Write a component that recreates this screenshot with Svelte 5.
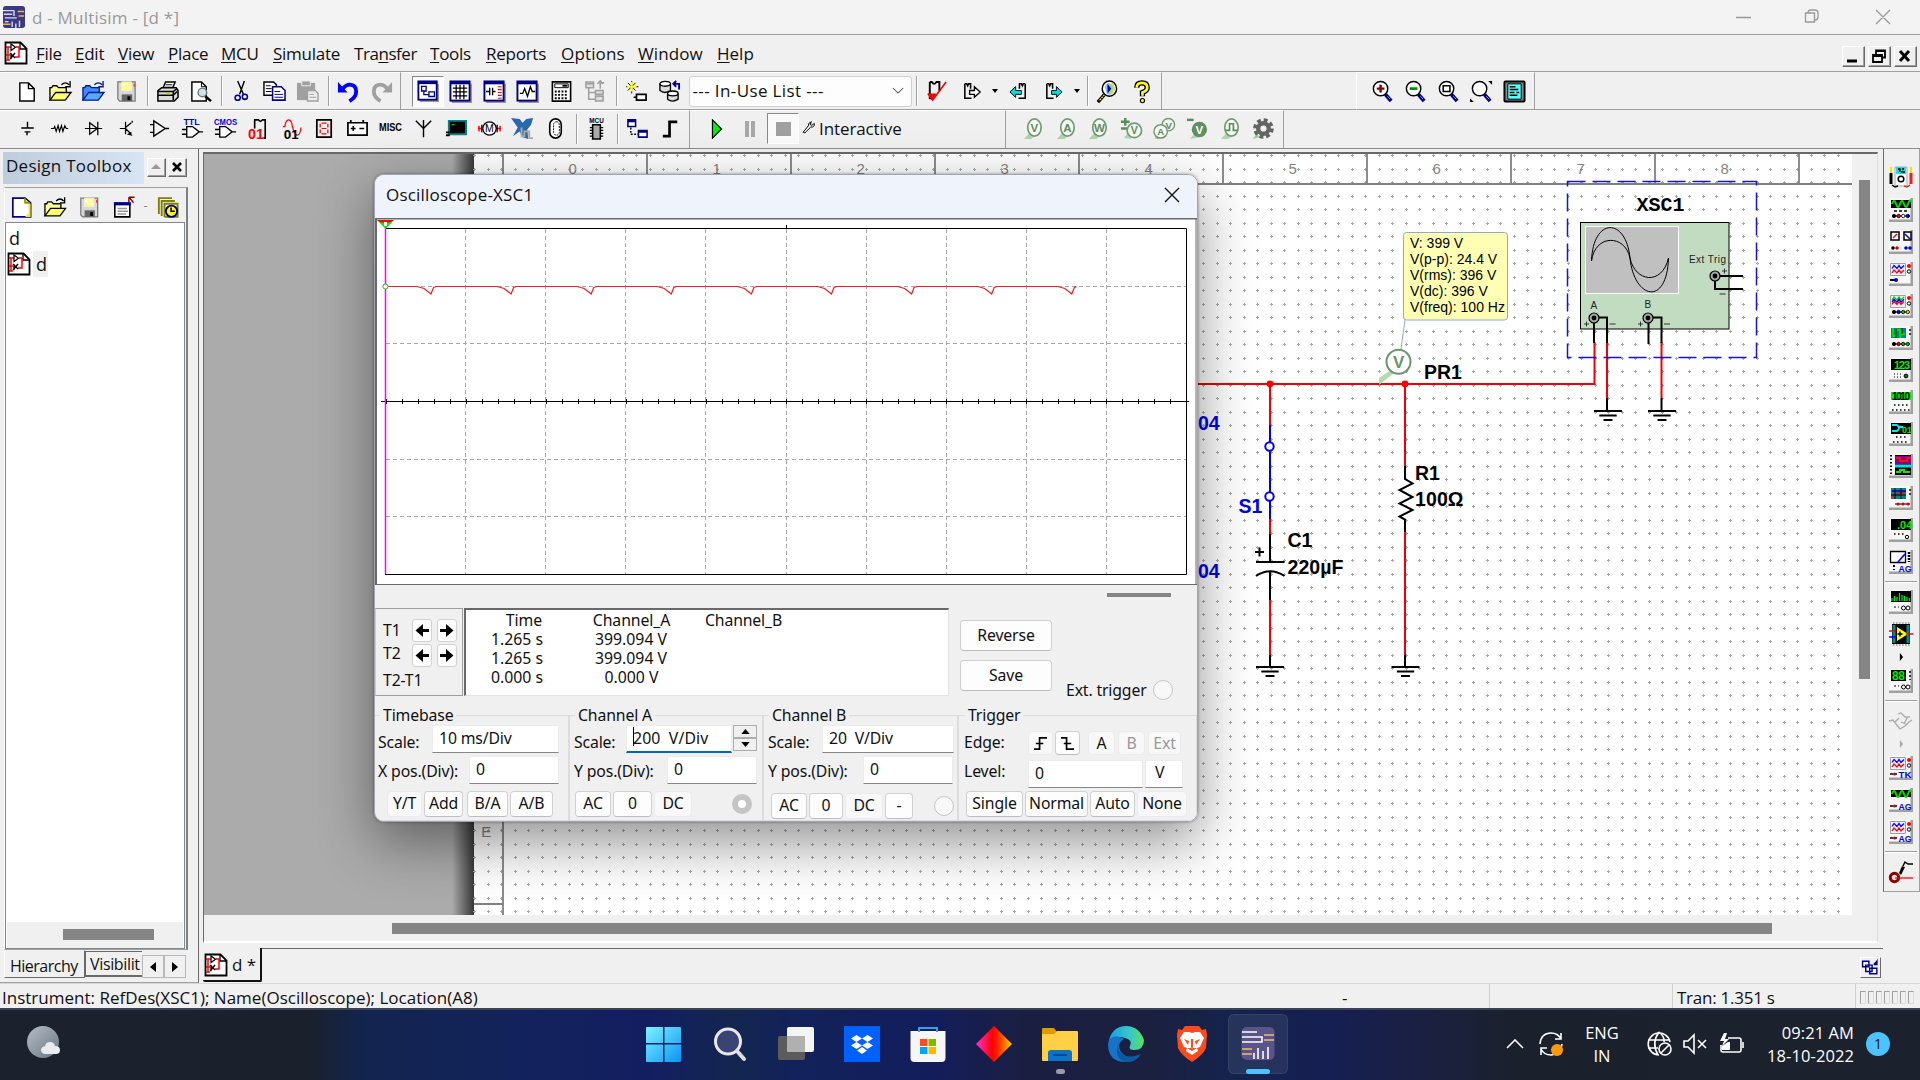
<script>
  const page = '<path d="M4 3h9l6 6v13H4z" fill="#fff" stroke="#000" stroke-width="1.5"/><path d="M13 3v6h6" fill="none" stroke="#000" stroke-width="1.5"/>';
  const folder = (back, front, line) =>
    `<path d="M1 21V8h2l1-2h4l2 2h8v5" fill="${back}" stroke="${line}" stroke-width="1.4"/><path d="M1 21l6-8h16l-6 8z" fill="${front}" stroke="${line}" stroke-width="1.4"/><path d="M13 5q4-4 8 0M22 1v6h-5" fill="none" stroke="${line}" stroke-width="1.4"/>`;
  const panel = (inner) =>
    `<path d="M3 23h20V4" fill="none" stroke="#999" stroke-width="2"/><rect x="1.5" y="1.5" width="20" height="20" fill="#fff" stroke="#000080" stroke-width="2"/><path d="M1 3h21" stroke="#000080" stroke-width="3"/>${inner}`;
  const lens = (inner) =>
    `<path d="M15 15l6 7" stroke="#000080" stroke-width="4"/><path d="M17 17l3 3" stroke="#88f" stroke-width="1"/><circle cx="10" cy="9" r="7.5" fill="#fff" stroke="#000" stroke-width="1.5"/>${inner}`;
  const probe = (t, solid) =>
    `<path d="M2 23l7-8 4 5-3 3z" fill="#aed6ae"/><ellipse cx="13" cy="11" rx="7" ry="9" fill="${solid ? '#5f8f5f' : '#f4f8f4'}" stroke="#739a73" stroke-width="1.8"/><text x="13" y="15.5" text-anchor="middle" font-size="12" font-weight="bold" fill="${solid ? '#fff' : '#5f8a5f'}">${t}</text>`;
  const inst = (inner) =>
    `<path d="M0 0h24v24H0z" fill="#a0a0a0"/><path d="M0 0h21.500v21.500H0z" fill="#f7f7f7"/>${inner}`;
  const screen = '<path d="M2 2h20v8H2z" fill="#000"/>';
  const pins = (a, b, c, d) => `<path d="M3 18h18" stroke="#000"/>` + [a, b, c, d].map((f, i) => `<circle cx="${5 + i * 4.600}" cy="18" r="1.7" fill="${f}" stroke="#000" stroke-width=".8"/>`).join('');
  const waves = (colors) =>
    `<path d="M1.500 1.500h15v12h-15z" fill="#eef" stroke="#a0a0a0"/>` +
    colors.map((c, i) => `<path d="M3 ${(colors.length > 2 ? 6 : 6.500) + i * (colors.length > 2 ? 2.200 : 4.500)}l2-3 3 3 2-3 2 3 3-3" fill="none" stroke="${c}" stroke-width="1.300"/>`).join('') +
    '<circle cx="20" cy="4" r="2" fill="#f00"/><circle cx="20" cy="9.500" r="1.700" fill="#fff" stroke="#000"/>';
  const tag = (t) => `<text x="9.500" y="22" font-size="9.500" font-weight="bold" fill="#00e" textLength="13" lengthAdjust="spacingAndGlyphs">${t}</text><path d="M1 18h8" stroke="#000" stroke-width="1.4" stroke-dasharray="3 1"/><circle cx="5.500" cy="18" r="1.500" fill="#c00"/>`;
  const floppy = '<path d="M3 2h18v20H5l-2-2z" fill="#d8d8d8" stroke="#777" stroke-width="1.3"/><path d="M7 2h10v9H7z" fill="#ffff70" stroke="#eee"/><path d="M8 4h2v2H8zM12 4h2v2h-2zM10 7h2v2h-2zM14 7h2v2h-2z" fill="#fff"/><path d="M7 15h11v7H7z" fill="#666"/><path d="M13 17h3v4h-3z" fill="#000"/><path d="M20 4v3" stroke="#f00"/>';

  const icons = {
    page,
    pageYellow: '<path d="M3 2h13l6 5v15H3z" fill="#fff" stroke="#00008b" stroke-width="1.800"/><path d="M15 2l7 6v14h-6l4-4v-9l-5-2z" fill="#ee0"/><path d="M16 2v5h5" fill="none" stroke="#880" stroke-width="1.5"/>',
    doc: '<path d="M1.500 1.500h15l6 6v15h-21z" fill="#fff" stroke="#000" stroke-width="1.800"/><path d="M16 2v6h6" fill="none" stroke="#000" stroke-width="1.300"/><path d="M2 6h5M2 14h4M4 6v13M2 19h4M12 6h3v10H11" fill="none" stroke="#f00" stroke-width="1.500"/><path d="M7 3v6.500l4.500-3.250z" fill="#fff" stroke="#000" stroke-width="1.200"/><path d="M6 12l5 5M11 12l-5 6M7 12v6" fill="none" stroke="#000" stroke-width="1.400"/>',
    open: folder('#ff9', '#ff6', '#000'),
    openBlue: folder('#3f8cff', '#58a8ff', '#001a8b'),
    save: floppy,
    print: '<path d="M7 9l3-7h10l-3 7" fill="#fff" stroke="#000" stroke-width="1.500"/><path d="M10 5h7M9 7.500h7" stroke="#000"/><path d="M2 11l4-3h15l2 3v7l-4 4H2z" fill="#ddd" stroke="#000" stroke-width="1.600"/><path d="M2 12h16l4-3M2 16h16l4-4M18 12v9" fill="none" stroke="#000" stroke-width="1.600"/><path d="M11 14h4" stroke="#cc0" stroke-width="2"/>',
    preview: '<path d="M3 2h10l5 5v15H3z" fill="#fff" stroke="#000" stroke-width="1.500"/><path d="M13 2v5h5" fill="none" stroke="#000"/><circle cx="14" cy="13" r="4.500" fill="#c8e6ee" stroke="#777" stroke-width="1.500"/><path d="M17 17l6 5" stroke="#000" stroke-width="2.500"/>',
    cut: '<path d="M8 1l6 14M15 1L10 15" stroke="#000" stroke-width="1.500"/><circle cx="8" cy="18.500" r="2.700" fill="none" stroke="#00008b" stroke-width="1.600"/><circle cx="15.500" cy="17.500" r="2.700" fill="none" stroke="#00008b" stroke-width="1.600"/>',
    copy: '<path d="M1 2h10l3 3v11H1z" fill="#fff" stroke="#000" stroke-width="1.500"/><path d="M3 6h5M3 9h6M3 12h6" stroke="#000"/><path d="M10 7h9l4 4v10H10z" fill="#fff" stroke="#00008b" stroke-width="1.600"/><path d="M12 12h6M12 15h9M12 18h9" stroke="#00008b"/>',
    paste: '<path d="M1 3h19v18H1z" fill="#a0a0a0"/><path d="M6 1h9v5H6z" fill="#a0a0a0" stroke="#eee"/><path d="M12 11h8l3 3v8H12z" fill="#eee" stroke="#a0a0a0" stroke-width="1.500"/><path d="M14 15h5M14 18h7" stroke="#a0a0a0"/>',
    undo: '<path d="M1 2v11h10z" fill="#00f"/><path d="M6 9q4-5 9-4t5 7-7 10" fill="none" stroke="#00f" stroke-width="4"/>',
    redo: '<path d="M23 2v11H13z" fill="#a0a0a0"/><path d="M18 9q-4-5-9-4t-5 7 7 10" fill="none" stroke="#a0a0a0" stroke-width="4"/>',
    tree: panel('<path d="M5 7h5v5H5zM13 13h6v5h-6zM7.500 12v4h5" fill="none" stroke="#000080" stroke-width="1.400"/>'),
    grid: panel('<path d="M4 8.500h15M4 12.500h15M4 16.500h15M7.500 5v15M11.500 5v15M15.500 5v15" stroke="#000" stroke-width="1.300"/>'),
    breadboard: panel('<path d="M3 12h4M10 12h3M7 8v8M10 8v8" stroke="#000" stroke-width="1.400"/><path d="M15.500 7h4M15.500 10h4M15.500 13h4M15.500 16h4M15.500 19h4" stroke="#f00" stroke-width="1.200"/>'),
    graph: panel('<path d="M4 14h3l2-5 3 8 3-10 2 5h3" fill="none" stroke="#000" stroke-width="1.400"/>'),
    calc: '<path d="M2.500 2h19v20h-19z" fill="#fff" stroke="#000" stroke-width="1.700"/><path d="M5 4h14v4H5z" fill="none" stroke="#000"/><path d="M13 6h5" stroke="#000" stroke-width="2"/><path d="M5 12h14M5 15.500h14M5 19h14" stroke="#000" stroke-width="2" stroke-dasharray="2 1.500"/>',
    treeOff: '<path d="M3 2h8v6H3zM13 11h8v4h-8zM13 17h8v5h-8z" fill="#ddd" stroke="#a0a0a0" stroke-width="1.600"/><path d="M3 4h8M6 8v12h7M6 13h7M18 9V3h4M15 4l3-3 3 3" fill="none" stroke="#a0a0a0" stroke-width="1.600"/>',
    newPart: '<path d="M7 1v13M1 7h13M3 3l8 8M11 3l-8 8" stroke="#000" stroke-width="1"/><path d="M7 2v10M2 7h10" stroke="#ff0" stroke-width="2"/><path d="M12 15h10v6H12zM9 18h3" fill="#fff" stroke="#000" stroke-width="1.800"/>',
    database: '<path d="M2 4v7q5 4 11 0V4" fill="#ddd" stroke="#000" stroke-width="1.400"/><ellipse cx="7.500" cy="4" rx="5.500" ry="2.500" fill="#fff" stroke="#000" stroke-width="1.400"/><path d="M10 14v6q5 4 11 0v-6" fill="#ddd" stroke="#000" stroke-width="1.400"/><ellipse cx="15.500" cy="14" rx="5.500" ry="2.500" fill="#fff" stroke="#000" stroke-width="1.400"/><path d="M22 10V4h-5M19 1l-3 3 3 3" fill="none" stroke="#00008b" stroke-width="2"/>',
    erc: '<path d="M5 2v17h3M5 2h2q3 4 5 0h3v10" fill="none" stroke="#000" stroke-width="2"/><path d="M3 14l5 7L22 2" fill="none" stroke="#f00" stroke-width="1.700"/><path d="M3 14h9l-4 8z" fill="#f00"/>',
    forward: '<path d="M4 4v15h7M4 4h2l1 2 1-2h2v5" fill="none" stroke="#000" stroke-width="1.600"/><path d="M9 11h5V7l6 5.500-6 5.500v-3H9z" fill="#fff" stroke="#000" stroke-width="1.400"/>',
    backCyan: '<path d="M19 4v15h-7M19 4h-2l-1 2-1-2h-2v5" fill="none" stroke="#000" stroke-width="1.600"/><path d="M15 11H9V7l-6 5.500L9 18v-3h6z" fill="#0dd" stroke="#000"/>',
    forwardCyan: '<path d="M4 4v15h7M4 4h2l1 2 1-2h2v5" fill="none" stroke="#000" stroke-width="1.600"/><path d="M9 11h5V7l6 5.500-6 5.500v-3H9z" fill="#0dd" stroke="#000"/>',
    find: '<path d="M9 15L2 23" stroke="#000" stroke-width="3.500"/><path d="M9 15L3 22" stroke="#ff0" stroke-width="1.300" stroke-dasharray="2 1"/><ellipse cx="14" cy="9" rx="7.500" ry="8" fill="#fff" stroke="#000" stroke-width="1.500"/><path d="M9 7q4-7 9-1v7q-4 5-7 1z" fill="#8ed0e0"/><path d="M12 4l4 5-4 5" fill="#00008b"/><path d="M17 3l2 6-3 6" stroke="#dd3" stroke-width="2" fill="none"/>',
    help: '<path d="M7 8q0-5 5.500-5t5.500 5q0 3-5 5v4" fill="none" stroke="#000" stroke-width="5.500"/><path d="M7 8q0-5 5.500-5t5.500 5q0 3-5 5v3.500" fill="none" stroke="#ff0" stroke-width="2.800"/><circle cx="13" cy="21.500" r="2.200" fill="#ff0" stroke="#000" stroke-width="1.200"/>',
    zoomIn: lens('<path d="M10 5v8M6 9h8" stroke="#8b0000" stroke-width="2.600"/>'),
    zoomOut: lens('<path d="M6 9h8" stroke="#080" stroke-width="2.800"/>'),
    zoomArea: lens('<path d="M6.500 6h7v6h-7z" fill="none" stroke="#000" stroke-width="1.600"/>'),
    zoomFit: lens('<path d="M19 1h4v4zM0 19v4h4z" fill="#000"/>'),
    zoomPage: '<rect x="1.500" y="1.500" width="21" height="21" rx="1" fill="#888" stroke="#000" stroke-width="2"/><path d="M5 4h14v16H5z" fill="#5ff" stroke="#000"/><path d="M7 7h6M7 10h9M7 13h5M7 16h8M14 13h3" stroke="#000" stroke-width="1.500"/>',
    ground: '<path d="M12 5v6M5.500 11.500h13M9 15.500h6M11.500 15v4" stroke="#000" stroke-width="1.500" fill="none"/>',
    resistor: '<path d="M2 12h3l1-2 1.500 5 2-6 1.500 6 2-6 1.500 6 2-6 1.500 3h2" fill="none" stroke="#000" stroke-width="1.200"/>',
    diode: '<path d="M3 12h18M8 6v12l8-6zM16.500 5v14" fill="none" stroke="#000" stroke-width="1.300"/>',
    transistor: '<path d="M5 12h6M11 5v13M11 11l6-5M11 12l6 6M18 4v2M18 19l-4-1 3-2" fill="none" stroke="#000" stroke-width="1.300"/>',
    opamp: '<path d="M6 4v16l12-8zM2 8h4M2 16h4M18 12h4" fill="#f4f4f4" stroke="#000" stroke-width="1.400"/>',
    ttl: '<text x="11" y="8" text-anchor="middle" font-size="10" font-weight="bold" fill="#00e" textLength="17" lengthAdjust="spacingAndGlyphs">TTL</text><path d="M6 10h6l7 5.500-7 5.500H6zM1 13h5M1 18h5M19 15.500h4" fill="#fff" stroke="#000" stroke-width="1.400"/>',
    cmos: '<text x="12" y="8" text-anchor="middle" font-size="10" font-weight="bold" fill="#00e" textLength="24" lengthAdjust="spacingAndGlyphs">CMOS</text><path d="M6 10h6l7 5.500-7 5.500H6zM1 13h5M1 18h5M19 15.500h4" fill="#fff" stroke="#000" stroke-width="1.400"/>',
    digital: '<path d="M8 12V3h4q2 3 4 0h3v19h-2" fill="none" stroke="#000" stroke-width="1.700"/><text x="1" y="23" font-size="15" font-weight="bold" fill="#f00">01</text>',
    mixed: '<path d="M3 10h2q1-7 4-7t4 7q2 9 5 9t4-8" fill="none" stroke="#f00" stroke-width="1.300"/><text x="4" y="23" font-size="14" font-weight="bold">01</text>',
    indicator: '<path d="M4 3h15v18H4z" fill="#eee" stroke="#000" stroke-width="1.800"/><path d="M9 6.500h5M9 12h5M9 17.500h5M7.500 7v4M15.500 7v4M7.500 13v4M15.500 13v4" stroke="#f00" stroke-width="1.300"/>',
    battery: '<path d="M2 6h20v13H2zM5 3v3M18 3v3" fill="#fff" stroke="#000" stroke-width="1.800"/><path d="M5 12h5M7.500 9.500v5M14 12h5" stroke="#000" stroke-width="1.500"/>',
    misc: '<text x="0" y="15" font-size="10.500" font-weight="bold" textLength="24" lengthAdjust="spacingAndGlyphs">MISC</text>',
    antenna: '<path d="M12 3v18M4 4l8 8 8-8" fill="none" stroke="#000" stroke-width="1.500"/>',
    monitor: '<path d="M4 4h18v14H4z" fill="#000" stroke="#088" stroke-width="2"/><path d="M1 16h5M1 19h4M6 8h2" stroke="#000" stroke-width="2"/><path d="M7 8h3" stroke="#0c0" stroke-width="1.500"/>',
    motor: '<path d="M0 12h5M19 12h5M1 9v6M23 9v6" stroke="#f00" stroke-width="1.500"/><circle cx="12" cy="12" r="7" fill="#fff" stroke="#000" stroke-width="1.300"/><text x="12" y="16" text-anchor="middle" font-size="11">M</text><path d="M4 8v8M20 8v8" stroke="#000" stroke-width="1.300"/>',
    ni: '<path d="M0 1l9 1 3 4 4-4 7-1-2 7-4 5 1 10-6-2-3-6-7 5 5-9z" fill="#2b68ad"/><path d="M11 11v9h3v-5h5v7h4" fill="none" stroke="#aaa" stroke-width="2"/>',
    connector: '<rect x="6" y="2" width="12" height="20" rx="6" fill="#fff" stroke="#000" stroke-width="1.700"/><rect x="10" y="5" width="6" height="14" rx="3" fill="none" stroke="#000" stroke-dasharray="2 1"/>',
    mcu: '<text x="12" y="6" text-anchor="middle" font-size="8" font-weight="bold" textLength="15" lengthAdjust="spacingAndGlyphs">MCU</text><path d="M8 8h8v15H8z" fill="#aaa" stroke="#000" stroke-width="1.600"/><path d="M5 11h3M5 14h3M5 17h3M5 20h3M16 11h3M16 14h3M16 17h3M16 20h3" stroke="#000" stroke-width="1.300"/>',
    hier: '<path d="M2 3h8v7H2zM13 14h9v7h-9z" fill="#fff" stroke="#000080" stroke-width="1.600"/><path d="M2 4h8M13 15h9" stroke="#000080" stroke-width="3"/><path d="M5 11v7h8" fill="none" stroke="#000" stroke-width="1.500" stroke-dasharray="2 1.500"/>',
    bus: '<path d="M4 20h7V5h8" fill="none" stroke="#000" stroke-width="2.800"/>',
    wrench: '<path d="M2 21L11 10q-1-5 5-7l-2 5 3 1 4-3q1 7-6 6L5 22z" fill="#fff" stroke="#000" stroke-width="1.700"/>',
    probeV: probe('V'), probeA: probe('A'), probeW: probe('W'),
    probeDiff: '<path d="M1 5h9M5.500 1v8M1 12h7" stroke="#5b8a5b" stroke-width="2.500"/><path d="M4 22l5-6 4 4-2 3z" fill="#aed6ae"/><circle cx="15" cy="14" r="7.500" fill="#f4f8f4" stroke="#739a73" stroke-width="1.800"/><text x="15" y="18" text-anchor="middle" font-size="11" font-weight="bold" fill="#5f8a5f">V</text>',
    probeVA: '<circle cx="16" cy="8" r="6.500" fill="#f4f8f4" stroke="#739a73" stroke-width="1.500"/><text x="16.500" y="12" text-anchor="middle" font-size="10" font-weight="bold" fill="#5f8a5f">V</text><path d="M2 23v-4l5 4z" fill="#aed6ae"/><circle cx="8" cy="15" r="7" fill="#f4f8f4" stroke="#739a73" stroke-width="1.500"/><text x="8" y="19" text-anchor="middle" font-size="10" font-weight="bold" fill="#5f8a5f">A</text>',
    probeRef: '<path d="M1 3h7" stroke="#5b8a5b" stroke-width="2.500"/><path d="M4 23l6-7 4 5z" fill="#aed6ae"/><circle cx="14" cy="13" r="8" fill="#5f8f5f"/><text x="14" y="17.500" text-anchor="middle" font-size="12" font-weight="bold" fill="#fff">V</text>',
    probeDig: '<path d="M2 23l7-8 4 5-3 3z" fill="#aed6ae"/><ellipse cx="13" cy="11" rx="7" ry="9" fill="#f4f8f4" stroke="#739a73" stroke-width="1.800"/><path d="M7 14h4V7h4v7h4" fill="none" stroke="#5b8a5b" stroke-width="1.700"/>',
    gear: '<path d="M2 23l4-6 3 4z" fill="#9c9"/><circle cx="13" cy="12" r="8.500" fill="none" stroke="#646464" stroke-width="4.500" stroke-dasharray="3.900 2.770"/><circle cx="13" cy="12" r="5.500" fill="none" stroke="#646464" stroke-width="4.500"/>',
    rename: '<path d="M3 8h16v14H3z" fill="#fff" stroke="#000" stroke-width="1.700"/><path d="M2 8h18" stroke="#00008b" stroke-width="3.500"/><path d="M6 13h10M6 16h11M6 19h9" stroke="#999" stroke-width="1.500"/><path d="M19 2l4 5M18 1v5M18 1h6" stroke="#8b0000" stroke-width="1.500"/>',
    versions: '<path d="M2 19V2h14M5 21V5h14M8 22V8h14v14H8" fill="none" stroke="#808000" stroke-width="2"/><circle cx="15.500" cy="16" r="6" fill="#ff0" stroke="#00008b" stroke-width="2"/><path d="M15 12v4h4" fill="none" stroke="#000" stroke-width="1.700"/>',
    cascade: '<path d="M2 4h8v7H2zM6 9h8v8H6zM11 13h9v7h-9z" fill="#fff" stroke="#00008b" stroke-width="1.800"/><path d="M16 7l3-3 2-3v8h-5z" fill="#00008b"/>',
    brand: '<rect width="24" height="24" rx="3" fill="#3a3a80"/><path d="M0 5h12M1 9h9M2 13h13M2 17h4" stroke="#dcdcf8" stroke-width="1.500"/><path d="M12 5v6M10 17v6M14 19v5M18 16v7" stroke="#dcdcf8" stroke-width="1.500"/><path d="M16 6h7M17 11h6M0 20h8" stroke="#f0b060" stroke-width="1.600"/>',
    multimeter: '<path d="M6 1h12v19H6z" fill="#f7f7f7" stroke="#aaa"/><path d="M7 1h10v7H7z" fill="#2dd"/><path d="M9 3h2v3M13 3h2M12 6h4" stroke="#000" stroke-width="1.300"/><circle cx="12" cy="13" r="2.800" fill="#fff" stroke="#000" stroke-width="1.500"/><path d="M2 1v6M22 1v6" stroke="#fd0" stroke-width="2"/><path d="M2 7v11" stroke="#000" stroke-width="3"/><path d="M22 7v11" stroke="#e22" stroke-width="3"/><path d="M3 19l3 2 3-1" fill="none" stroke="#000" stroke-width="1.500"/><path d="M21 19l-3 2-3-1" fill="none" stroke="#e22" stroke-width="1.500"/>',
    funcgen: inst(screen + '<path d="M3 6q2-6 4 0t4 0 4 0 4 0 3-2" fill="none" stroke="#0d0" stroke-width="2"/><path d="M5 13h14" stroke="#000" stroke-width="1.500" stroke-dasharray="3 2"/>' + pins('#000', '#f00', '#fff', '#00f')),
    watt: inst('<path d="M2 2h8v8H2zM15 2h7v8h-7z" fill="#fff" stroke="#000" stroke-width="1.500"/><path d="M4 8l4-4" stroke="#f00" stroke-width="1.500"/><path d="M16 4l5 5" stroke="#00f" stroke-width="1.500"/><circle cx="4" cy="18" r="1.800"/><circle cx="8" cy="18" r="1.800" fill="#d00"/><circle cx="17" cy="18" r="1.800" fill="#00c"/><circle cx="21" cy="18" r="1.800" fill="#00c"/>'),
    scope2: inst(waves(['#00f', '#f00']) + '<path d="M1 18h5" stroke="#000" stroke-width="2"/><circle cx="7" cy="18" r="2" fill="#00c"/>'),
    scope4: inst(waves(['#0c0', '#00f', '#f00']) + pins('#000', '#00f', '#0c0', '#fd0')),
    bode: inst('<path d="M2 2h15v10H2z" fill="#088"/><path d="M4 2v8h3V4h4v8M12 8h4" fill="none" stroke="#0d0" stroke-width="2"/><path d="M7 3v9M13 2v6" stroke="#000"/><path d="M21 3v8" stroke="#000" stroke-width="1.400" stroke-dasharray="2"/>' + pins('#000', '#f00', '#0a0', '#0c0')),
    counter: inst('<path d="M2 1h20v11H2z" fill="#000"/><text x="5" y="11" font-size="11" font-weight="bold" fill="#0e0" textLength="16">123</text><circle cx="17" cy="18" r="1.900" fill="#080" stroke="#000"/><path d="M5 16h7M5 19h7" stroke="#000" stroke-dasharray="1 2"/>'),
    wordgen: inst('<path d="M2 2h20v8H2z" fill="#0e0"/><text x="3" y="10" font-size="10" font-weight="bold" textLength="18">1010</text><path d="M5 15h15M3 20h18" stroke="#000" stroke-width="1.300" stroke-dasharray="1.500 2.500"/>'),
    logicConv: inst('<path d="M2 1h20v11H2z" fill="#000"/><path d="M3 3h5q4 3 0 6H3M10 5h4" fill="none" stroke="#0ee" stroke-width="1.800"/><text x="13" y="11" font-size="9" font-weight="bold" fill="#0e0">01</text><path d="M7 15h11M4 20h16" stroke="#000" stroke-width="1.500" stroke-dasharray="1.500 2.500"/>'),
    logicAn: inst('<path d="M6 1h16v20H6z" fill="#000"/><path d="M6 2h16v8H6z" fill="#808"/><path d="M7 4h4v3h7V4h4" fill="none" stroke="#e11" stroke-width="2"/><path d="M6 12h16" stroke="#1de" stroke-width="3"/><path d="M7 18h4v-2h4v2h6" fill="none" stroke="#0e0" stroke-width="2"/><path d="M2 1v21" stroke="#000" stroke-width="2" stroke-dasharray="1.500 2"/>'),
    iv: inst('<path d="M2 2h15v11H2z" fill="#088"/><path d="M3 12q2-5 14-6" fill="none" stroke="#e11" stroke-width="1.600"/><path d="M3 5h14" stroke="#00d" stroke-width="1.600"/><path d="M6 2v11M12 2v11M2 9h15" stroke="#000"/><path d="M21 3v8" stroke="#000" stroke-width="1.400" stroke-dasharray="2"/><path d="M6 18h15" stroke="#000"/><circle cx="9" cy="18" r="1.500" fill="#c00"/><circle cx="14" cy="18" r="1.500" fill="#c00"/><circle cx="19" cy="18" r="1.500" fill="#c00"/>'),
    distortion: inst('<path d="M2 1h20v11H2z" fill="#000"/><text x="8" y="11" font-size="11" font-weight="bold" fill="#0e0">.04</text><path d="M5 16h12" stroke="#000" stroke-width="1.300" stroke-dasharray="1.500 2.500"/><circle cx="18" cy="19" r="1.700" fill="#fff" stroke="#000"/>'),
    agilentIv: inst('<path d="M1.500 1.500h15v11h-15z" fill="#fff" stroke="#000" stroke-width="1.300"/><path d="M9 12l7-8" stroke="#00f" stroke-width="1.700"/><path d="M20 2v10" stroke="#000" stroke-width="2.500" stroke-dasharray="2 1"/><text x="9.500" y="22" font-size="9.500" font-weight="bold" fill="#00e" textLength="13" lengthAdjust="spacingAndGlyphs">AG</text><path d="M5 15v5" stroke="#000" stroke-width="2" stroke-dasharray="2"/>'),
    spectrum: inst('<path d="M2 1h20v11H2z" fill="#000"/><path d="M3 11V8M5.500 11V6M8 11V7M10.500 11V3M13 11V5M15.500 11V6M18 11V7M20.500 11V8" stroke="#0e0" stroke-width="1.300"/><path d="M5 17h5" stroke="#000" stroke-dasharray="2"/><circle cx="14.500" cy="18" r="2" fill="#fff" stroke="#000"/><circle cx="19" cy="18" r="2" fill="#fff" stroke="#000"/>'),
    labview: '<path d="M3 2h18v20H3z" fill="#000"/><path d="M4 1h17M4 23h17" stroke="#aaa" stroke-width="2" stroke-dasharray="1.500 1.500"/><path d="M5 3v18M19 3v18" stroke="#088" stroke-width="3"/><path d="M8 5v14l11-7z" fill="#ff0"/><path d="M11 9.500v5M8.500 12h5" stroke="#000" stroke-width="1.500"/><path d="M0 9h6M17 12h7" stroke="#f00" stroke-width="1.500"/><path d="M0 15h6" stroke="#00f" stroke-width="1.500"/>',
    network: inst('<path d="M2 1h15v11H2z" fill="#000"/><text x="3" y="11" font-size="12" font-weight="bold" fill="#0e0" textLength="13">88</text><path d="M21 2v9" stroke="#000" stroke-width="1.500" stroke-dasharray="2"/><path d="M5 17h5" stroke="#000" stroke-dasharray="2"/><circle cx="14.500" cy="18" r="2" fill="#fff" stroke="#000"/><circle cx="19" cy="18" r="2" fill="#fff" stroke="#000"/>'),
    elvis: '<path d="M0 12l4-1 3 4 4 5 5-3 4-4 3-2M9 5l3-1 4 4h5M6 13l4-4M12 13l5 2M18 9l-3 6" fill="none" stroke="#aaa" stroke-width="1.300"/>',
    tekScope: inst(waves(['#00f', '#f00']) + tag('TK')),
    agGen: inst('<path d="M2 2h20v7H2z" fill="#000"/><path d="M3 6q2-6 4 0t4 0 4 0 4 0 3-2" fill="none" stroke="#0d0" stroke-width="2"/>' + tag('AG')),
    agScope: inst(waves(['#00f', '#f00']) + tag('AG')),
    clamp: '<circle cx="5.500" cy="17.500" r="4.200" fill="#f3dcdc" stroke="#8b0000" stroke-width="3"/><path d="M10 13l3-7 3 1-4 8z" fill="#000"/><path d="M14 6l2-4 3 2h5" fill="none" stroke="#000" stroke-width="1.500"/><path d="M6 18h18" stroke="#f00" stroke-width="1.300"/>',
  };

  const standard = ['page', 'open', 'openBlue', 'save', '|', 'print', 'preview', '|', 'cut', 'copy', 'paste', '|', 'undo', 'redo'];
  const views = ['grid', 'breadboard', 'graph', 'calc', 'treeOff'];
  const parts = ['ground', 'resistor', 'diode', 'transistor', 'opamp', 'ttl', 'cmos', 'digital', 'mixed', 'indicator', 'battery', 'misc', 'antenna', 'monitor', 'motor', 'ni', 'connector', '|', 'mcu', '|', 'hier', 'bus'];
  const zooms = ['zoomIn', 'zoomOut', 'zoomArea', 'zoomFit', 'zoomPage'];
  const probes = ['probeV', 'probeA', 'probeW', 'probeDiff', 'probeVA', 'probeRef', 'probeDig', 'gear'];
  const instruments = ['multimeter', 'funcgen', 'watt', 'scope2', 'scope4', 'bode', 'counter', 'wordgen', 'logicConv', 'logicAn', 'iv', 'distortion', 'agilentIv', '|', 'spectrum', 'labview', '>', 'network', '|', 'elvis', '>off', 'tekScope', 'agGen', 'agScope', '|', 'clamp'];
  // Each menu label is split around its mnemonic letter.
  const menus = [['', 'F', 'ile'], ['', 'E', 'dit'], ['', 'V', 'iew'], ['', 'P', 'lace'], ['', 'M', 'CU'], ['', 'S', 'imulate'], ['Tra', 'n', 'sfer'], ['', 'T', 'ools'], ['', 'R', 'eports'], ['', 'O', 'ptions'], ['', 'W', 'indow'], ['', 'H', 'elp']];

  // Schematic sheet: snap grid, drawn as small crosses.
  let dots = '';
  for (let r = 0; r < 57; r++)
    for (let c = 0; c < 102; c++) {
      const x = Math.round(474.2 + c * 13.5), y = Math.round(155 + r * 13.5);
      dots += `M${x - 1} ${y + 0.5}h3M${x + 0.5} ${y - 1}v3`;
    }
  const ruler = Array.from({ length: 9 }, (_, i) => ({ n: i, x: 572.5 + i * 144, tick: 647 + i * 144 }));

  // Oscilloscope trace: flat line with one ripple dip each division.
  let trace = 'M386 286.5';
  for (let i = 0; i < 9; i++) {
    trace += `H${417 + i * 80.1}l7 2l7 5.500l2.500 -6.500l1.500 -.5`;
    trace += i < 8 ? 'l1 -.5' : 'v-1';
  }
  const vlines = [465.5, 545.5, 625.5, 705.5, 786.5, 866.5, 946.5, 1026.5, 1106.5];
  const hlines = [286.5, 343.5, 459.5, 516.5];
  let ticks = '';
  for (let x = 385.5; x < 1187; x += 16.02) ticks += `M${Math.round(x) + 0.5} 399v5`;
  const probeText = ['V: 399 V', 'V(p-p): 24.4 V', 'V(rms): 396 V', 'V(dc): 396 V', 'V(freq): 100 Hz'];
</script>

{#snippet ico(name)}
  <svg class="ico" viewBox="0 0 24 24">{@html icons[name]}</svg>
{/snippet}

{#snippet strip(list)}
  {#each list as n}
    {#if n === '|'}<i class="sep"></i>{:else}<span class="slot">{@render ico(n)}</span>{/if}
  {/each}
{/snippet}

{#snippet gnd(x, y, w)}
  <path class="blk" d="M{x - w} {y}h{w * 2}M{x - w * 0.62} {y + 4.5}h{w * 1.24}M{x - w * 0.32} {y + 9}h{w * 0.64}" />
{/snippet}

{#snippet jack(x, y)}
  <circle cx={x} cy={y} r="5" fill="#a8a8a8" stroke="#000" stroke-width="1.2" />
  <circle cx={x} cy={y} r="2.4" />
{/snippet}

<div class="app">
  <header class="title">
    <span class="logo">{@render ico('brand')}</span>
    <span class="name">d - Multisim - [d *]</span>
    <svg class="winctl" width="160" height="20" viewBox="0 0 160 20"><path d="M2 10.500h15M71.500 6h9v9h-9zM74 6q0-3 3-3h4q3 0 3 3v4q0 3-3 3M142 3l14 14M156 3l-14 14" /></svg>
  </header>

  <nav class="menu">
    <span class="docico">{@render ico('doc')}</span>
    <div class="items">
      {#each menus as [a, u, b]}<span>{a}<u>{u}</u>{b}</span>{/each}
    </div>
    <div class="mdi">
      <b><svg viewBox="0 0 20 18"><path d="M4 14h10" stroke-width="3" /></svg></b>
      <b><svg viewBox="0 0 20 18"><path d="M7 7V3.500h9v7h-3M4 8h9v7H4zM4 9h9M7 4h9" stroke-width="1.800" /></svg></b>
      <b><svg viewBox="0 0 20 18"><path d="M5 4l9 10M14 4l-9 10" stroke-width="3" /></svg></b>
    </div>
  </nav>

  <div class="bar one">
    <div class="tb std">{@render strip(standard)}</div>
    <div class="tb main">
      <span class="pressed">{@render ico('tree')}</span>
      {@render strip(views)}
      <i class="sep"></i>
      {@render strip(['newPart', 'database'])}
      <div class="combo"><span>--- In-Use List ---</span><svg width="12" height="8" viewBox="0 0 14 9"><path d="M1 1l6 6 6-6" fill="none" stroke="#555" stroke-width="1.200" /></svg></div>
      <i class="sep"></i>
      <span class="slot">{@render ico('erc')}</span>
      <span class="slot wide">{@render ico('forward')}</span><em></em>
      <span class="slot back">{@render ico('backCyan')}</span>
      <span class="slot wide">{@render ico('forwardCyan')}</span><em></em>
      <i class="sep"></i>
      {@render strip(['find', 'help'])}
    </div>
    <div class="tb zoom">{@render strip(zooms)}</div>
  </div>

  <div class="bar two">
    <div class="tb parts">{@render strip(parts)}</div>
    <div class="tb sim">
      <svg class="play" width="12" height="20" viewBox="0 0 12 22"><path d="M1 1v20L11 11z" fill="#0e0" stroke="#000" stroke-width="1.300" /></svg>
      <span class="pause"></span>
      <span class="stop"></span>
      <span class="wr">{@render ico('wrench')}</span>
      <span class="inter">Interactive</span>
    </div>
    <div class="tb probes">{@render strip(probes)}</div>
  </div>

  <main>
    <aside>
      <div class="ahead">
        <h2>Design Toolbox</h2>
        <b><svg viewBox="0 0 16 16"><path d="M3 10h10L8 5z" fill="#999" /></svg></b>
        <b><svg viewBox="0 0 16 16"><path d="M4 4l8 8M12 4l-8 8" stroke="#000" stroke-width="2.600" /></svg></b>
      </div>
      <div class="abox">
        <div class="aicons">
          {@render ico('pageYellow')}{@render ico('open')}{@render ico('save')}{@render ico('rename')}<small>-</small>{@render ico('versions')}
        </div>
        <div class="tree">
          <div class="root">d</div>
          <div class="leaf">{@render ico('doc')}<span>d</span></div>
          <div class="ascroll"><i></i></div>
        </div>
      </div>
      <div class="atabs">
        <span class="on">Hierarchy</span><span class="idle">Visibilit</span>
        <button aria-label="Previous tab"><svg viewBox="0 0 8 12"><path d="M7 1v10L1 6z" /></svg></button><button aria-label="Next tab"><svg viewBox="0 0 8 12"><path d="M1 1v10l6-5z" /></svg></button>
      </div>
    </aside>

    <section class="work">
      <div class="mdiarea">
        <div class="canvasrow">
          <svg class="sheet" width="1648" height="761" viewBox="204 154 1648 761">
            <defs>
              <linearGradient id="edge"><stop offset="0" stop-color="#000" stop-opacity="0" /><stop offset="1" stop-color="#000" stop-opacity=".68" /></linearGradient>
            </defs>
            <path d="M204 154h270v761H204z" fill="#ababab" />
            <path d="M452 154h22v761h-22z" fill="url(#edge)" />
            <path d="M474 154h1378v761H474z" fill="#fff" />
            <path d={dots} stroke="#aaa" shape-rendering="crispEdges" />
            <g stroke="#808080" stroke-width="1.8" fill="none">
              <path d="M503 154v761M473 184h1379M474 904h29" />
              {#each ruler as r}<path d="M{r.tick} 154v30" />{/each}
            </g>
            <g class="rul">
              {#each ruler as r}<text x={r.x} y="173.500">{r.n}</text>{/each}
              <text x="486" y="837">E</text>
            </g>

            <g class="red"><path d="M1190 384H1594.500V342M1270 384V425M1270 519V534M1270 600V655M1405 384V466M1405 532V655M1607 342V398M1661.500 342V398" /></g>
            <circle cx="1270" cy="384" r="3.400" fill="#f00" /><circle cx="1405" cy="384" r="3.400" fill="#f00" />
            <path class="blue" d="M1270 425V519" />
            <circle class="blue" cx="1269.500" cy="446.500" r="4.200" /><circle class="blue" cx="1269.500" cy="496.500" r="4.200" />
            <path class="blk" d="M1270 534V562M1256 562h28.500M1256 576Q1270 566.500 1284.500 576M1270 571.500V600M1255 552h9M1259.500 547.500v9M1270 655v12M1405 655v12M1405 466V479L1412.500 483.500 1399.500 490 1412.500 497 1399.500 503.500 1412.500 510 1399.500 516.500 1405 519.500V532" />
            {@render gnd(1270, 667, 14)}{@render gnd(1405.5, 667, 14)}
            {@render gnd(1608, 411, 14)}{@render gnd(1662, 411, 14)}

            <g class="lbl">
              <text x="1424" y="378.500">PR1</text><text x="1415" y="479.500">R1</text><text x="1415" y="506" textLength="48.500">100Ω</text>
              <text x="1287.500" y="546.500">C1</text><text x="1287.500" y="574" textLength="56">220µF</text>
              <g fill="#0000f0"><text x="1198" y="429.500">04</text><text x="1198" y="578">04</text><text x="1238.500" y="513">S1</text></g>
            </g>

            <path d="M1405 320l-4 29" stroke="#8fa8dc" />
            <rect x="1403.500" y="232.500" width="104" height="87.500" rx="3" fill="#ffffb3" stroke="#8fa8d8" />
            <g class="pt">{#each probeText as t, i}<text x="1410" y={248 + i * 16}>{t}</text>{/each}</g>
            <path d="M1391 370l3 3-10 8-5 4v-7z" fill="#b4dab0" />
            <circle cx="1398.500" cy="361.800" r="12" fill="#fff" stroke="#6b956b" stroke-width="2" />
            <text class="pv" x="1398.500" y="368">V</text>

            <rect x="1567.500" y="181.500" width="189" height="176" fill="none" stroke="#1515d8" stroke-width="1.500" stroke-dasharray="18 7" />
            <text class="mono" x="1636.500" y="211">XSC1</text>
            <rect x="1580.500" y="222.500" width="148.500" height="106.500" fill="#c1dcc1" stroke="#000" />
            <rect x="1585.500" y="226.500" width="93" height="67" fill="#c0c0c0" stroke="#fff" />
            <path d="M1591.500 261C1593 217 1626 217 1630 258S1667 307 1668.500 258M1591.500 261C1595 234 1625 234 1630 258S1662 286 1668.500 258" fill="none" stroke="#000" />
            <path class="blk" d="M1594 318V343M1594 317.500H1607V343M1648.500 318V344M1648.500 317.500H1661.500V343M1715 276h28M1715 276v13h28M1607 398v13M1661.500 398v13" />
            {@render jack(1594, 318)}{@render jack(1648, 318)}{@render jack(1715, 276)}
            <path d="M1584 324h5M1586.500 321.500v5M1638 324h5M1640.500 321.500v5M1722 271h5M1724.500 268.500v5M1609.500 324h6M1664 324h6M1719.500 294h6" stroke="#333" />
            <g class="tiny"><text x="1689" y="262.500" textLength="37">Ext Trig</text><text x="1590.500" y="309">A</text><text x="1644.500" y="307.500">B</text></g>
          </svg>
          <div class="vscroll"><i></i></div>
        </div>
        <div class="hscroll"><i></i></div>
      </div>
      <div class="doctabs">
        <span class="dtab">{@render ico('doc')}<span>d *</span></span>
        <span class="line"></span>
        <span class="casc">{@render ico('cascade')}</span>
      </div>
    </section>

    <div class="inst">
      {#each instruments as n}
        {#if n === '|'}<i class="hsep"></i>
        {:else if n[0] === '>'}<svg class={n === '>' ? 'more' : 'more faded'} viewBox="0 0 6 10"><path d="M1 0v10l4-5z" /></svg>
        {:else}<span>{@render ico(n)}</span>{/if}
      {/each}
    </div>
  </main>

  <footer class="status">
    <span class="s1">Instrument: RefDes(XSC1); Name(Oscilloscope); Location(A8)</span>
    <span class="s2">-</span><span class="s3"></span>
    <span class="s4">Tran: 1.351 s</span>
    <span class="s5">{#each Array(7) as _}<i></i>{/each}</span>
  </footer>

  <div class="task">
    <svg class="weather" width="36" height="36" viewBox="0 0 36 36"><defs><linearGradient id="moon" x2="1" y2="1"><stop stop-color="#b4bec8" /><stop offset="1" stop-color="#6c7680" /></linearGradient></defs><circle cx="17" cy="17" r="16" fill="url(#moon)" /><path d="M19 29q-4-1-4-4t4-4q1-4 5-4t5 4q5 0 5 4t-4 4z" fill="#e8ecf0" /></svg>
    <div class="apps">
      <span><svg viewBox="0 0 36 36"><defs><linearGradient id="win" x2="1" y2="1"><stop stop-color="#7df3ff" /><stop offset="1" stop-color="#0a94f5" /></linearGradient></defs><path d="M0 2q0-1 1-1h16v16H0zM18.500 1H34q1 0 1 1v15H18.500zM0 18.500h17V36H1q-1 0-1-1zM18.500 18.500H35V35q0 1-1 1H18.500z" fill="url(#win)" /></svg></span>
      <span><svg viewBox="0 0 36 36"><circle cx="16" cy="15.500" r="12.500" fill="#3a4474" stroke="#e8e8e8" stroke-width="3" /><path d="M25 25l7 8" stroke="#ddd" stroke-width="4" stroke-linecap="round" /></svg></span>
      <span><svg viewBox="0 0 36 36"><rect x="0" y="10" width="27" height="24" rx="2" fill="#5c5c5c" /><rect x="9" y="1" width="27" height="25" rx="2" fill="#f4f4f4" /><path d="M9 10h18v16H11q-2 0-2-2z" fill="#b0b0b0" /></svg></span>
      <span><svg viewBox="0 0 36 36"><path d="M0 0h36v36H0z" fill="#0061ff" /><path d="M12.500 9l5.500 3.500-5.500 3.500L7 12.500zM23.500 9l5.500 3.500-5.500 3.500-5.500-3.500zM12.500 16l5.500 3.500-5.500 3.500L7 19.500zM23.500 16l5.500 3.500-5.500 3.500-5.500-3.500zM18 21l5 3.500-5 3.500-5-3.500z" fill="#fff" /></svg></span>
      <span><svg viewBox="0 0 36 36"><path d="M9 8V2h18v6" fill="none" stroke="#2aa4e8" stroke-width="2" /><path d="M0.500 5h35v27q0 4-4 4h-27q-4 0-4-4z" fill="#f6f6f6" /><path d="M9 6V2h18v4" fill="none" stroke="#2aa4e8" stroke-width="2" /><path d="M10 13h7.500v7H10z" fill="#f25022" /><path d="M18.500 13H26v7h-7.500z" fill="#7fba00" /><path d="M10 21h7.500v7H10z" fill="#00a4ef" /><path d="M18.500 21H26v7h-7.500z" fill="#ffb900" /></svg></span>
      <span><svg viewBox="0 0 36 36"><defs><linearGradient id="dia"><stop stop-color="#f3c" /><stop offset=".45" stop-color="#f00" /><stop offset=".6" stop-color="#f20" /><stop offset="1" stop-color="#fc0" /></linearGradient></defs><path d="M18 0l18 18-18 18L0 18z" fill="url(#dia)" /></svg></span>
      <span><svg viewBox="0 0 36 36"><path d="M0 3q0-1 1-1h11l3 4-3 4H0z" fill="#e09a00" /><path d="M0 8h12l3-3h20q1 0 1 1v28q0 1-1 1H1q-1 0-1-1z" fill="#ffcf45" /><path d="M6 35v-8q0-3 3-3h18q3 0 3 3v8z" fill="#0b74c8" /><path d="M11 29h14" stroke="#064a86" stroke-width="2" /></svg><i class="dot"></i></span>
      <span><svg viewBox="0 0 36 36"><defs><linearGradient id="ed1"><stop stop-color="#1a9fe0" /><stop offset=".6" stop-color="#35c8c8" /><stop offset="1" stop-color="#5fe05a" /></linearGradient></defs><path d="M1 14Q5 0 18 0t18 14q0 10-10 10-6 0-4-4 3-6-5-8Q8 9 1 14z" fill="url(#ed1)" /><path d="M1 14q6-7 15-1-8 5-3 13 6 8 19 4-6 6-14 6Q0 36 0 18z" fill="#1673c8" /><path d="M16 13q-9 5-4 13 6 8 21 2-6 9-16 8-9-3-8-13 1-8 7-10z" fill="#0c59a4" /></svg></span>
      <span><svg viewBox="0 0 36 36"><path d="M11 0h14l3 4 4-1 1 6-1 13q-3 7-14 14Q7 29 4 22L3 9l1-6 4 1z" fill="#fb4a1c" /><path d="M10 6h5l3 1 3-1h5l4 6-4 9-3 1 1 3-6 4-6-4 1-3-3-1-4-9z" fill="#fff" /><path d="M10 13l5 2-1 4zM26 13l-5 2 1 4zM17 13h2v8l-1 2-1-2zM13 22l5 3 5-3" fill="#fb4a1c" /></svg></span>
      <span class="active"><svg viewBox="0 0 36 36"><rect x="1.500" y="1" width="33" height="33" rx="5" fill="#5a5488" /><path d="M2 6h15M2 11h20v5H2M2 16h8" fill="none" stroke="#fff" stroke-width="1.600" /><path d="M18 33V22M23 33V25M28 33V21M14 33v-6" stroke="#fff" stroke-width="1.600" /><path d="M24 9h10M24 14h10M2 23h10M2 28h10" stroke="#f0bd70" stroke-width="1.600" /></svg><i class="bar4"></i></span>
    </div>
    <div class="tray">
      <svg width="18" height="10" viewBox="0 0 18 10"><path d="M1 9l8-8 8 8" /></svg>
      <svg class="sync" width="26" height="26" viewBox="0 0 26 26"><path d="M2 13Q3 2 13 2q7 0 10 6M23 2v6h-6M24 13q-1 10-11 11-7 0-10-6M3 24v-7h6" /><circle cx="19" cy="19" r="6" fill="#ff9a0a" stroke="none" /></svg>
      <div class="lang">ENG<br />IN</div>
      <svg class="globe" width="26" height="26" viewBox="0 0 26 26"><path d="M23 11A11 11 0 1 0 12 24M1 9h22M1 17h10M12 1Q4 12 11 24M12 1q6 5 5 10" /><circle cx="18" cy="18" r="6" /><path d="M14 22l8-8" /></svg>
      <svg class="mute" width="26" height="22" viewBox="0 0 26 22"><path d="M2 8h4l6-6v18l-6-6H2zM16 7l8 8M24 7l-8 8" /></svg>
      <svg class="batt" width="26" height="22" viewBox="0 0 26 22"><path d="M10 5h11q2 0 2 2v10q0 2-2 2H5q-2 0-2-2v-5M25 9v6" /><path d="M4 17V13l6-4h2v8zM6 0L2 8h4l-2 5 7-7H7l2-6z" fill="#fff" stroke="none" /></svg>
      <div class="clock">09:21 AM<br />18-10-2022</div>
      <span class="badge">1</span>
    </div>
  </div>

  <div class="shade"></div>
  <div class="osc">
    <div class="ohead"><span>Oscilloscope-XSC1</span><svg width="16" height="16" viewBox="0 0 16 16"><path d="M1 1l14 14M15 1L1 15" stroke="#111" stroke-width="1.400" /></svg></div>
    <svg class="plot" width="822" height="367" viewBox="375 218 822 367">
      <path d="M375 218h822v367H375z" fill="#fff" />
      <path d="M376 585V218.500H1197" fill="none" stroke="#696969" stroke-width="2" />
      <path d="M375 584.500h822M1196 219v366" fill="none" stroke="#696969" />
      <g stroke="#a8a8a8" stroke-dasharray="4 3">
        {#each vlines as x}<path d="M{x} 229V574" />{/each}
        {#each hlines as y}<path d="M386 {y}H1187" />{/each}
      </g>
      <path d="M385 228.500H1186.500V574.500H385M381 401.500h808M786.500 225v4{ticks}" fill="none" stroke="#000" />
      <path d={trace} fill="none" stroke="#f02020" stroke-width="1.200" />
      <path d="M385.500 226V574" stroke="#f0f" stroke-width="1.500" />
      <path d="M377 220h17l-8.500 9z" fill="#0e0" /><path d="M377 220h17l-4 2.500h-9z" fill="#f00" /><path d="M384 222h3v4h-3z" fill="#fff" />
      <circle cx="385.500" cy="286.500" r="2.600" fill="#fff" stroke="#0c0" />
    </svg>
    <div class="oscroll"><i></i></div>
    <div class="readout">
      <div class="cursors">
        <span>T1</span><b>{@render arrow(1)}</b><b>{@render arrow(0)}</b>
        <span>T2</span><b>{@render arrow(1)}</b><b>{@render arrow(0)}</b>
        <span class="diff">T2-T1</span>
      </div>
      <div class="vals">
        <span>Time</span><span>Channel_A</span><span>Channel_B</span>
        <span>1.265 s</span><span>399.094 V</span><span></span>
        <span>1.265 s</span><span>399.094 V</span><span></span>
        <span>0.000 s</span><span>0.000 V</span><span></span>
      </div>
      <div class="side">
        <b class="btn">Reverse</b><b class="btn">Save</b>
        <div class="ext">Ext. trigger <i class="radio"></i></div>
      </div>
    </div>
    <div class="groups">
      <fieldset class="g1">
        <legend>Timebase</legend>
        <div class="row"><label for="ts">Scale:</label><span class="inp" id="ts">10 ms/Div</span></div>
        <div class="row"><label for="tx">X pos.(Div):</label><span class="inp" id="tx">0</span></div>
        <div class="btns"><b class="btn flat">Y/T</b><b class="btn">Add</b><b class="btn">B/A</b><b class="btn">A/B</b></div>
      </fieldset>
      <fieldset class="g2">
        <legend>Channel A</legend>
        <div class="row"><label for="as">Scale:</label><span class="inp focus" id="as"><i class="caret"></i>200&nbsp; V/Div</span><span class="spin"><i><svg viewBox="0 0 10 6"><path d="M0 6h10L5 0z" /></svg></i><i><svg viewBox="0 0 10 6"><path d="M0 0h10L5 6z" /></svg></i></span></div>
        <div class="row"><label for="ap">Y pos.(Div):</label><span class="inp" id="ap">0</span></div>
        <div class="btns"><b class="btn">AC</b><b class="btn">0</b><b class="btn flat">DC</b><i class="radio sel"></i></div>
      </fieldset>
      <fieldset class="g3">
        <legend>Channel B</legend>
        <div class="row"><label for="bs">Scale:</label><span class="inp" id="bs">20&nbsp; V/Div</span></div>
        <div class="row"><label for="bp">Y pos.(Div):</label><span class="inp" id="bp">0</span></div>
        <div class="btns"><b class="btn">AC</b><b class="btn">0</b><b class="btn flat">DC</b><b class="btn">-</b><i class="radio"></i></div>
      </fieldset>
      <fieldset class="g4">
        <legend>Trigger</legend>
        <div class="row edge"><label for="ed">Edge:</label>
          <b class="btn flat" id="ed"><svg viewBox="0 0 16 14"><path d="M1 13h6V1h8M3 7h8" /></svg></b>
          <b class="btn"><svg viewBox="0 0 16 14"><path d="M1 1h6v12h8M4 7h8" /></svg></b>
          <b class="btn flat">A</b><b class="btn flat dim">B</b><b class="btn flat dim">Ext</b>
        </div>
        <div class="row level"><label for="lv">Level:</label><span class="inp" id="lv">0</span><span class="inp unit">V</span></div>
        <div class="btns"><b class="btn">Single</b><b class="btn">Normal</b><b class="btn">Auto</b><b class="btn flat">None</b></div>
      </fieldset>
    </div>
  </div>
</div>

{#snippet arrow(left)}
  <svg class:flip={left} viewBox="0 0 14 13"><path d="M0 5h6V0l7.500 6.500L6 13V8H0z" /></svg>
{/snippet}

<style>
  :global(body) { margin: 0; overflow: hidden; }
  .app { position: relative; width: 1920px; height: 1080px; display: flex; flex-direction: column; background: #f0f0f0; font: 17px/22px "Open Sans", "Noto Sans", sans-serif; letter-spacing: -0.35px; color: #111; overflow: hidden; box-sizing: border-box; }
  .app :global(*) { box-sizing: border-box; }
  svg { display: block; flex: none; }
  i, em, b { font-style: normal; font-weight: normal; }
  .ico { width: 24px; height: 24px; overflow: visible; font-family: "Liberation Sans", sans-serif; letter-spacing: 0; }

  .title { flex: none; height: 35px; background: #f3f3f3; border-bottom: 1px solid #a0a0a0; display: flex; align-items: center; padding-left: 3px; color: #999; }
  .logo .ico { width: 22px; height: 22px; }
  .name { margin: 1px 0 0 7px; flex: 1; letter-spacing: .22px; }
  .winctl { margin-right: 26px; }
  .winctl path { fill: none; stroke: #999; stroke-width: 1.300; }

  .menu { flex: none; height: 37px; display: flex; align-items: center; padding-left: 4px; border-bottom: 1px solid #a0a0a0; }
  .items { flex: 1; margin: 2px 0 0 8px; display: grid; grid-template-columns: 39px 43px 50px 53px 52px 81px 76px 56px 75px 77px 79px 60px; letter-spacing: -.25px; }
  .items span:nth-child(7) { letter-spacing: -.45px; }
  .items span:nth-child(10) { letter-spacing: .15px; }
  .items span:nth-child(11) { letter-spacing: .1px; }
  .items span:nth-child(12) { letter-spacing: 0; }
  u { text-underline-offset: 2px; text-decoration-thickness: 1px; }
  .mdi { display: flex; gap: 3px; padding: 6px 3px 0 0; }
  .mdi b { width: 23px; height: 21px; border: 1px solid; border-color: #fff #696969 #696969 #fff; box-shadow: inset -1px -1px #a0a0a0; }
  .mdi svg { width: 20px; height: 18px; fill: none; stroke: #000; }

  .bar { flex: none; height: 38px; display: flex; }
  .one { border-bottom: 1px solid #a0a0a0; }
  .tb { display: flex; align-items: center; border-right: 1px solid #a0a0a0; border-top: 1px solid #fff; padding-bottom: 2px; }
  .one .tb { padding-bottom: 0; }
  .slot { width: 33px; display: flex; justify-content: center; flex: none; }
  .slot .ico { width: 23px; height: 23px; }
  .sep { width: 8px; height: 30px; flex: none; background: linear-gradient(90deg, transparent 4px, #a0a0a0 4px, #a0a0a0 5px, #fff 5px, #fff 6px, transparent 6px); }
  .std { width: 401px; padding-left: 11px; }
  .main { width: 761px; padding-left: 11px; }
  .main .slot { width: 33.500px; }
  .pressed { width: 32px; height: 31px; background: #fafafa; border: 1px solid; border-color: #888 #fff #fff #888; display: flex; align-items: center; justify-content: center; }
  .pressed .ico { width: 22px; height: 22px; }
  .combo { width: 223px; height: 31px; margin: 0 0 0 2px; background: #fdfdfd; border: 1px solid #d0d0d0; border-radius: 3px; display: flex; align-items: center; justify-content: space-between; padding: 0 7px 1px 3px; letter-spacing: .38px; white-space: nowrap; }
  .main .slot.wide { width: 39px; }
  .main .slot.back { width: 34px; }
  em { width: 0; height: 0; border: 3px solid transparent; border-top: 4px solid #000; border-bottom: 0; margin: 0 3px 0 0; flex: none; }
  .zoom { margin-left: 194px; width: 179px; padding-left: 9px; border-bottom: 1px solid #a0a0a0; height: 38px; border-left: 1px solid #fff; }
  .parts { width: 690px; padding-left: 11px; }
  .sim { width: 316px; padding-left: 21px; }
  .pause { width: 10px; height: 16px; border: 4px solid #a8a8a8; border-width: 0 4px; margin: 0 12px 0 22px; }
  .stop { width: 32px; height: 31px; border: 1px solid; border-color: #888 #fff #fff #888; background: #fafafa; display: flex; align-items: center; justify-content: center; }
  .stop::after { content: ''; width: 15px; height: 14px; background: #a0a0a0; }
  .wr .ico { width: 14px; height: 16px; margin: -4px 3px 0 3px; }
  .inter { letter-spacing: -.1px; }
  .probes { width: 278px; padding-left: 11px; }
  .probes .slot { width: 32.800px; }

  main { flex: none; height: 835px; display: flex; border-top: 1px solid #8c8c8c; }
  aside { width: 199px; height: 834px; border-right: 1px solid #696969; border-bottom: 1px solid #a0a0a0; padding: 3px 0 0 3px; }
  .ahead { display: flex; height: 35px; align-items: flex-start; }
  h2 { margin: 0 3px 0 0; width: 141px; height: 32px; background: linear-gradient(90deg, #bfccdb, #d6e4f3); font: 17px/27px "Open Sans", sans-serif; padding-left: 3px; letter-spacing: .26px; white-space: nowrap; }
  .ahead b { margin: 6px 2px 0 0; width: 19px; height: 19px; border: 1px solid; border-color: #fff #696969 #696969 #fff; box-shadow: inset -1px -1px #a0a0a0; }
  .ahead svg { width: 16px; height: 16px; }
  .abox { width: 184px; height: 763px; border: 1px solid #a0a0a0; border-right: 2px solid #808080; border-color: #a0a0a0 #808080 #a0a0a0 #fff; margin-left: 1px; }
  .aicons { display: flex; height: 34px; align-items: flex-end; padding: 0 0 3px 5px; gap: 11.400px; }
  .aicons .ico { width: 22.500px; height: 23px; }
  .aicons small { width: 4px; color: #888; line-height: 28px; font-size: 13px; margin: 0 -2px 0 -2px; }
  .tree { width: 180px; height: 727px; background: #fff; border: 1px solid #828790; display: flex; flex-direction: column; font-size: 18px; }
  .root { padding: 4px 0 0 3px; height: 28px; }
  .leaf { display: flex; align-items: center; gap: 2px; padding-left: 1px; }
  .leaf span { background: #f0f0f0; width: 15px; height: 26px; line-height: 26px; padding-left: 3px; }
  .ascroll { height: 26px; background: #f0f0f0; margin: auto 1px 0; padding: 7px 0 0 56px; }
  .ascroll i { display: block; width: 91px; height: 11px; background: #858585; }
  .atabs { display: flex; font-size: 16px; letter-spacing: -.5px; }
  .on { width: 81px; height: 28px; border: 1px solid; border-color: transparent #696969 #696969 #fff; padding: 4px 0 0 5px; margin-left: 1px; }
  .idle { width: 57px; height: 26px; margin-top: 1px; border: 1px solid #696969; border-width: 1px 0 2px 1px; padding: 1px 0 0 4px; letter-spacing: -.35px; }
  .atabs button { width: 22px; height: 23px; margin-top: 5px; background: #f0f0f0; border: 1px solid #b8b8b8; padding: 0 6px; }
  .atabs button svg { width: 8px; height: 12px; }

  .work { width: 1684px; display: flex; flex-direction: column; padding: 3px 0 0 4px; }
  .mdiarea { height: 791px; width: 1675px; border: 1px solid #696969; border-width: 2px 0 0 1px; border-right: 1px solid #ddd; border-bottom: 2px solid #fff; display: flex; flex-direction: column; }
  .canvasrow { display: flex; height: 761px; }
  .vscroll { width: 25px; padding: 26px 0 0 7px; }
  .vscroll i { display: block; width: 11px; height: 499px; background: #858585; }
  .hscroll { padding: 8px 0 0 188px; }
  .hscroll i { display: block; width: 1380px; height: 11px; background: #858585; }
  .doctabs { display: flex; margin-top: 5px; height: 35px; }
  .dtab { width: 59px; height: 34px; border: 2px solid #111; border-width: 0 2px 2px 0; border-radius: 0 0 2px 2px; display: flex; align-items: center; padding: 2px 0 0 1px; gap: 4px; white-space: nowrap; font-size: 17px; letter-spacing: 0; }
  .line { flex: 1; border-top: 1px solid #696969; }
  .casc { width: 25px; border-top: 1px solid #696969; padding: 8px 0 0 2px; }
  .casc .ico { width: 21px; height: 21px; border: 1px solid; border-color: #fff #696969 #696969 #fff; }

  .rul { font: 15px "Liberation Sans", sans-serif; fill: #848484; text-anchor: middle; }
  .red path { fill: none; stroke: #f00000; stroke-width: 2; }
  .blue { fill: #fff; stroke: #0000f0; stroke-width: 2; }
  .blk { fill: none; stroke: #000; stroke-width: 2; }
  .lbl { font: bold 19.500px "Liberation Sans", sans-serif; letter-spacing: 0; }
  .pt { font: 14px "Liberation Sans", sans-serif; letter-spacing: 0; }
  .pv { font: bold 17px "Liberation Sans", sans-serif; fill: #6b956b; text-anchor: middle; }
  .mono { font: bold 20px "Liberation Mono", monospace; letter-spacing: 0; }
  .tiny { font: 10px "Liberation Sans", sans-serif; letter-spacing: 0; fill: #222; }

  .inst { width: 37px; height: 743px; border: 1px solid #a0a0a0; border-width: 0 1px 1px 1px; border-left-color: #696969; padding-top: 13px; display: flex; flex-direction: column; align-items: center; }
  .inst span { height: 32px; display: flex; align-items: center; padding-right: 2px; }
  .hsep { width: 32px; height: 8px; border-top: 3px solid #f0f0f0; background: linear-gradient(#a0a0a0 1px, #fff 1px, #fff 2px, transparent 2px); margin-right: 2px; flex: none; }
  .more { width: 5px; height: 8px; margin: 3px 0 4px; }
  .faded path { fill: #aaa; }

  .status { flex: none; height: 25px; border-top: 1px solid #d7d7d7; display: flex; font-size: 17px; line-height: 28px; white-space: nowrap; }
  .s1 { width: 1342px; padding-left: 2px; letter-spacing: .01px; }
  .s2 { width: 148px; border-right: 1px solid #d0d0d0; }
  .s3 { width: 183px; border-right: 1px solid #d0d0d0; }
  .s4 { width: 183px; border-right: 1px solid #d0d0d0; padding-left: 4px; letter-spacing: -.25px; }
  .s5 { display: flex; gap: 2px; padding: 7px 0 0 4px; }
  .s5 i { width: 6px; height: 13px; border: 1px solid #b4b4b4; border-color: #a0a0a0 #ddd #ddd #a0a0a0; }

  .task { position: relative; z-index: 0; flex: none; height: 72px; border-top: 2px solid #3b4252; display: flex; align-items: center; background: linear-gradient(90deg, #1c222d 0, #1a212d 310px, #12244f 365px, #12235a 500px, #131e61 650px, #13264f 735px, #12225a 790px, #131d5c 930px, #1a1f42 1020px, #1b2040 1150px, #14234e 1240px, #151f52 1330px, #1b2040 1430px, #1a212d 1510px, #1c222d 1920px); color: #fff; }
  .weather { margin: -4px 0 0 26px; }
  .apps { display: flex; margin: -3px 0 0 569px; }
  .apps span { width: 66px; height: 60px; display: flex; flex-direction: column; align-items: center; padding-top: 12px; }
  .apps svg { width: 36px; height: 36px; }
  .apps .active { width: 60px; margin-left: 3px; border-radius: 6px; background: #ffffff14; border: 1px solid #ffffff12; padding-top: 11px; }
  .apps i { height: 5px; border-radius: 3px; margin-top: 7px; background: #9a9ca8; width: 9px; flex: none; }
  .apps .bar4 { width: 24px; background: #4cc2ff; }
  .tray { margin: -2px 0 0 218px; display: flex; align-items: center; font-size: 16.500px; line-height: 23px; letter-spacing: 0; }
  .tray svg { fill: none; stroke: #fff; stroke-width: 1.600; }
  .tray .sync { margin-left: 14px; }
  .lang { width: 36px; margin-left: 20px; text-align: center; }
  .globe { margin-left: 27px; }
  .mute { margin-left: 9px; }
  .batt { margin-left: 10px; }
  .clock { width: 92px; margin-left: 18px; text-align: right; white-space: nowrap; letter-spacing: .08px; }
  .badge { width: 24px; height: 24px; border-radius: 50%; background: #4cc2ff; color: #111; margin-left: 12px; text-align: center; font-size: 14px; }

  .shade, .osc { position: absolute; left: 374px; top: 174px; width: 824px; height: 648px; border-radius: 10px; }
  .shade { box-shadow: 0 20px 56px rgba(0, 0, 0, .44), 0 0 3px rgba(0, 0, 0, .4); }
  .osc { border: 1px solid #a2a5aa; background: #f0f0f0; overflow: hidden; font: 15.800px/19px "Noto Sans", sans-serif; letter-spacing: -.15px; }
  .ohead { height: 43px; background: #eff3fb; display: flex; justify-content: space-between; align-items: center; padding: 0 17px 4px 11px; font: 17px "Open Sans", sans-serif; letter-spacing: .2px; }
  .oscroll { height: 23px; padding: 8px 0 0 732px; }
  .oscroll i { display: block; width: 64px; height: 4px; background: #858585; }
  .readout { display: flex; height: 88px; }
  .cursors { width: 88px; height: 88px; border: 1px solid #a0a0a0; border-left-color: #ccc; display: grid; grid-template: 25px 23px 1fr / 29px 25px 25px; padding: 10px 0 0 7px; }
  .cursors span { line-height: 24px; margin-top: -1px; }
  .cursors span:nth-child(4) { line-height: 20px; }
  .cursors .diff { grid-column: 1 / 4; line-height: 28px; }
  .cursors b { width: 20px; height: 23px; background: #fdfdfd; border: 1px solid #d2d2d2; border-radius: 3px; display: flex; align-items: center; justify-content: center; }
  .cursors svg { width: 14px; height: 13px; }
  .flip { transform: scaleX(-1); }
  .vals { width: 485px; height: 88px; margin-left: 1px; background: #fff; border: 2px solid #696969; border-width: 2px 1px 1px 2px; border-right-color: #e3e3e3; border-bottom-color: #e3e3e3; display: grid; grid-template: repeat(4, 19px) / 102px 123px 120px; text-align: center; line-height: 20px; letter-spacing: 0; }
  .vals span { white-space: pre; }
  .vals span:nth-child(3n + 1) { padding-right: 0; }
  .vals span:nth-child(3n + 2) { padding-left: 3px; }
  .vals span:nth-child(1) { padding-left: 14px; }
  .vals span:nth-child(2) { padding-left: 4px; letter-spacing: -.1px; }
  .vals span:nth-child(3) { padding-right: 15px; letter-spacing: -.15px; }
  .vals span:nth-child(11) { padding-left: 4px; }
  .side { margin-left: 11px; padding-top: 12px; display: flex; flex-direction: column; }
  .side .btn { width: 92px; height: 31px; margin-bottom: 9px; }
  .ext { display: flex; gap: 6px; margin: -20px 0 0 106px; white-space: nowrap; align-items: center; }
  .btn { background: #fdfdfd; border: 1px solid #d0d0d0; border-bottom-color: #bdbdbd; border-radius: 4px; display: flex; align-items: center; justify-content: center; color: #111; flex: none; }
  .btn.flat { background: #f8f8f8; border-color: #ebebeb; }
  .btn.dim { color: #999; }
  .radio { width: 20px; height: 20px; border-radius: 50%; border: 1px solid #c4c4c4; background: #f8f8f8; flex: none; }
  .radio.sel { border: 6px solid #c4c4c4; background: #fff; }
  .groups { display: grid; grid-template-columns: 195px 194px 195px 1fr; padding-top: 9px; }
  fieldset { height: 116px; min-width: 0; margin: 0; border: 1px solid #dcdcdc; border-left-width: 0; border-right-width: 2px; padding: 0 0 0 3px; }
  legend { padding: 0 3px; margin-left: 2px; height: 20px; line-height: 21px; }
  .g2 legend, .g3 legend { margin-left: 1px; }
  .g4 legend { margin-left: 1px; }
  .row { display: flex; height: 31px; align-items: flex-start; }
  label { width: 54px; line-height: 35px; height: 28px; flex: none; }
  .row:nth-of-type(2) label { width: 91px; line-height: 30px; white-space: nowrap; }
  .inp { width: 127px; height: 28px; background: #fff; border: 1px solid #ececec; border-bottom: 1px solid #868686; line-height: 24px; padding-left: 6px; white-space: pre; }
  .row:nth-of-type(2) .inp { width: 90px; }
  .g2, .g3 { padding-left: 4px; }
  .g2 label { width: 52px; }
  .g2 .focus { width: 106px; border-bottom: 2px solid #0067c0; display: flex; align-items: center; letter-spacing: .1px; padding-bottom: 1px; }
  .caret { width: 1px; height: 19px; background: #000; margin: -3px -1px 0 0; }
  .spin { margin-left: 1px; }
  .spin i { display: flex; width: 24px; height: 13px; border: 1px solid #adadad; align-items: center; justify-content: center; }
  .spin svg { width: 9px; height: 5px; }
  .g2 .row:nth-of-type(2) label { width: 93px; }
  .g3 label { width: 54px; }
  .g3 .inp { width: 132px; }
  .g3 .row:nth-of-type(2) label { width: 95px; }
  .btns { display: flex; gap: 2px; padding: 4px 0 0 9px; align-items: center; }
  .btns .btn { height: 26px; padding-bottom: 1px; }
  .g1 .btn:nth-child(1) { width: 35px; }
  .g1 .btn:nth-child(2) { width: 39px; }
  .g1 .btn:nth-child(3) { width: 41px; margin-left: 2px; }
  .g1 .btn:nth-child(4) { width: 43px; }
  .g2 .btns { padding-left: 1px; }
  .g3 .btns { padding: 6px 0 0 3px; }
  .g2 .btn:nth-child(1), .g3 .btn:nth-child(1) { width: 36px; }
  .g2 .btn:nth-child(2) { width: 39px; }
  .g2 .btn:nth-child(3), .g3 .btn:nth-child(3) { width: 38px; }
  .g3 .btn:nth-child(2) { width: 34px; }
  .g3 .btn:nth-child(4) { width: 28px; }
  .g2 .radio { margin-left: 38px; }
  .g3 .radio { margin-left: 19px; }
  .g4 { border-right-width: 1px; padding-left: 5px; }
  .g4 label { width: 64px; }
  .edge .btn { height: 24px; margin-top: 6px; width: 25px; margin-right: 2px; }
  .edge .btn svg { width: 15px; height: 13px; fill: none; stroke: #000; stroke-width: 1.800; }
  .edge .btn:nth-of-type(3) { margin-left: 6px; }
  .edge .btn:nth-of-type(3), .edge .btn:nth-of-type(4) { width: 27px; margin-right: 3px; }
  .edge .btn:nth-of-type(5) { width: 33px; }
  .g4 .row:nth-of-type(2) label { width: 64px; }
  .g4 .row:nth-of-type(2) .inp { width: 115px; margin-top: 4px; }
  .g4 .row:nth-of-type(2) .unit { width: 38px; margin-left: 2px; padding-left: 9px; line-height: 22px; }
  .g4 .btns { padding-left: 2px; padding-top: 4px; }
  .g4 .btns .btn:nth-child(1) { width: 57px; }
  .g4 .btns .btn:nth-child(2) { width: 63px; }
  .g4 .btns .btn:nth-child(3) { width: 45px; }
  .g4 .btns .btn:nth-child(4) { width: 50px; }
</style>
